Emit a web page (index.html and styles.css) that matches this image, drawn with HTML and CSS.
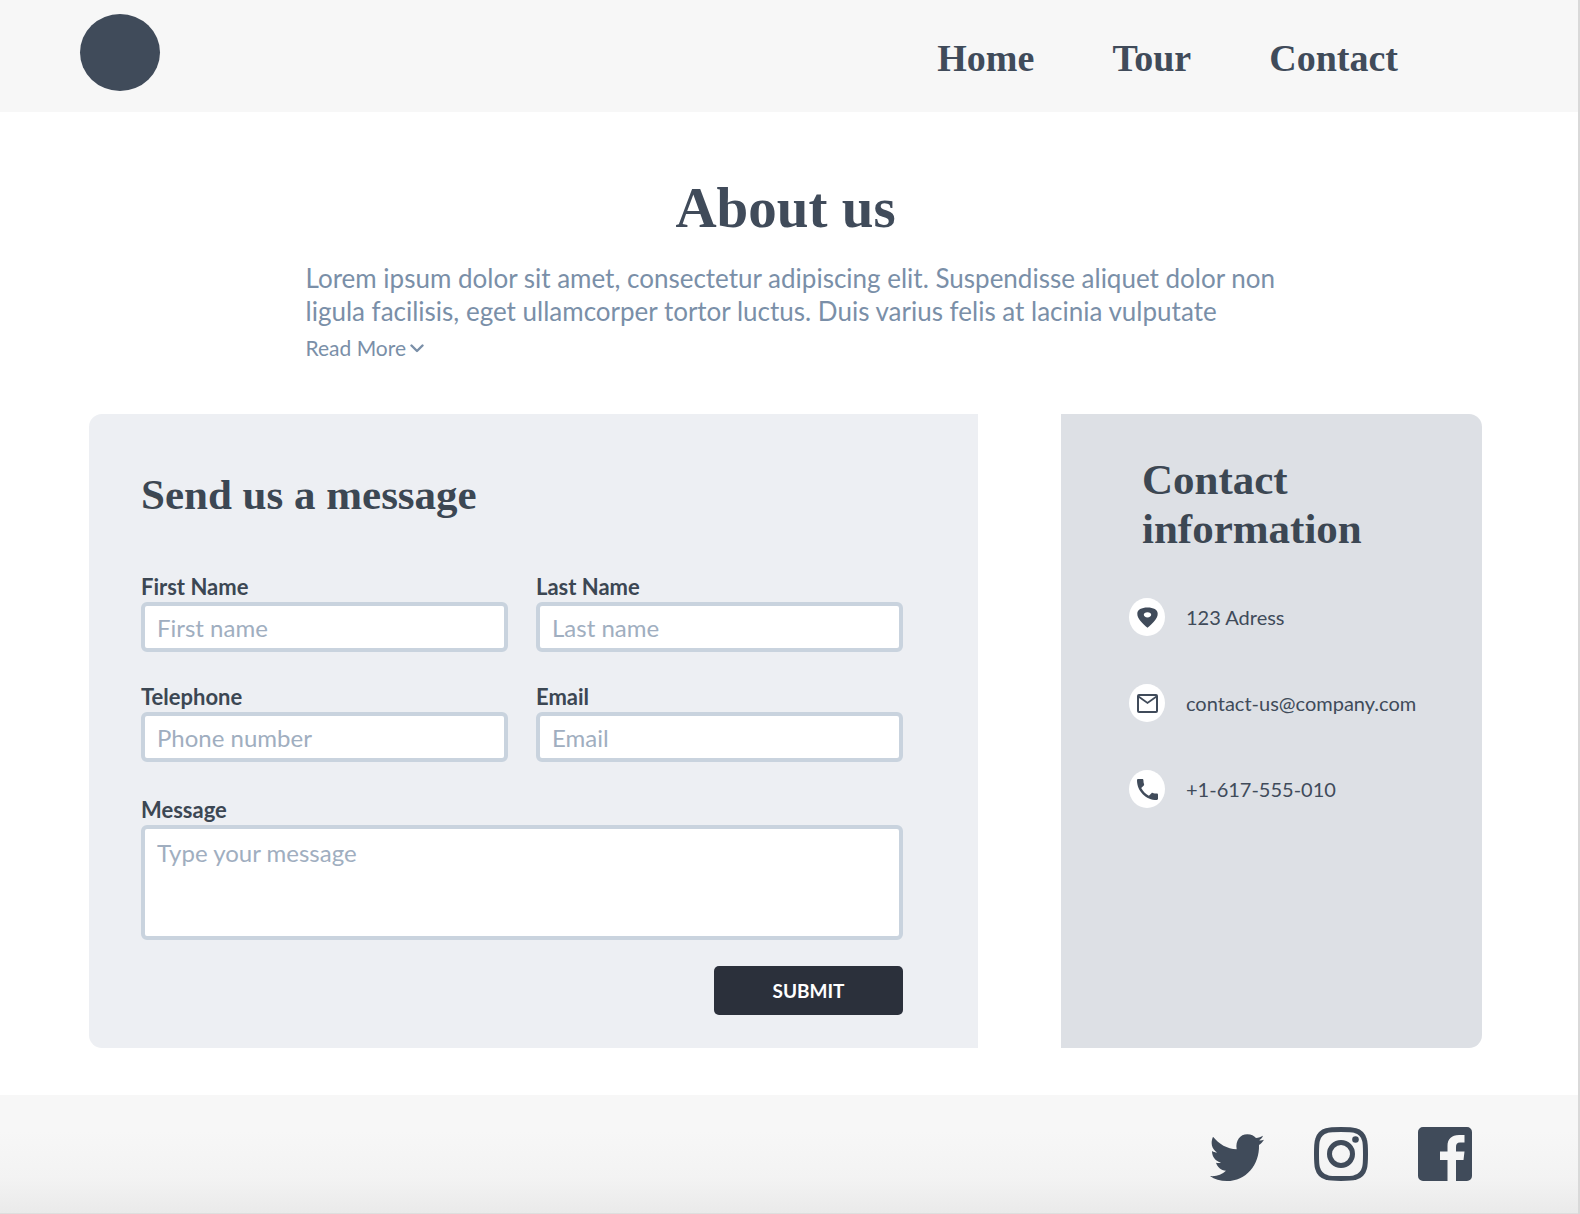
FILE: index.html
```html
<!DOCTYPE html>
<html lang="en">
<head>
  <meta charset="utf-8">
  <meta name="viewport" content="width=device-width, initial-scale=1">
  <title>About us</title>
  <link rel="stylesheet" href="styles.css">
</head>
<body>
  <header class="site-header">
    <a class="logo" href="#" aria-label="Start page"></a>
    <nav class="nav">
      <a href="#">Home</a>
      <a href="#">Tour</a>
      <a href="#">Contact</a>
    </nav>
  </header>

  <main>
    <section class="about">
      <h1>About us</h1>
      <div class="about-text">
        <p>Lorem ipsum dolor sit amet, consectetur adipiscing elit. Suspendisse aliquet dolor non ligula facilisis, eget ullamcorper tortor luctus. Duis varius felis at lacinia vulputate</p>
        <a class="read-more" href="#">Read More
          <svg width="14" height="9" viewBox="0 0 14 9" aria-hidden="true"><path d="M1.500 1.500 7 7l5.500-5.500" fill="none" stroke="currentColor" stroke-width="2.400" stroke-linecap="round" stroke-linejoin="round"/></svg>
        </a>
      </div>
    </section>

    <div class="panels">
      <form class="message-panel">
        <h2>Send us a message</h2>
        <div class="fields">
          <div class="field">
            <label for="first">First Name</label>
            <input id="first" type="text" placeholder="First name">
          </div>
          <div class="field">
            <label for="last">Last Name</label>
            <input id="last" type="text" placeholder="Last name">
          </div>
          <div class="field">
            <label for="phone">Telephone</label>
            <input id="phone" type="tel" placeholder="Phone number">
          </div>
          <div class="field">
            <label for="email">Email</label>
            <input id="email" type="email" placeholder="Email">
          </div>
          <div class="field field-wide">
            <label for="message">Message</label>
            <textarea id="message" placeholder="Type your message"></textarea>
          </div>
        </div>
        <button class="submit" type="submit">SUBMIT</button>
      </form>

      <aside class="info-panel">
        <h2>Contact<br>information</h2>
        <ul class="contacts">
          <li>
            <span class="badge"><svg width="21" height="21" viewBox="0 0 21 21" aria-hidden="true"><path fill="currentColor" fill-rule="evenodd" d="M10.500.5C4.500.5.3 2.600.3 6.800c0 5.200 5.200 9.700 10.200 14 5-4.300 10.200-8.800 10.200-14C20.700 2.600 16.500.5 10.500.5Zm0 4.700c2.200 0 3.700 1.100 3.700 2.600s-1.500 2.600-3.700 2.600-3.700-1.100-3.700-2.600 1.500-2.600 3.700-2.600Z"/></svg></span>
            <span>123 Adress</span>
          </li>
          <li>
            <span class="badge"><svg width="21" height="19" viewBox="0 0 21 19" aria-hidden="true"><rect x="1" y="1" width="19" height="17" rx="1" fill="none" stroke="currentColor" stroke-width="2"/><path d="m1.500 2.500 9 6.500 9-6.500" fill="none" stroke="currentColor" stroke-width="1.800"/></svg></span>
            <span>contact-us@company.com</span>
          </li>
          <li>
            <span class="badge"><svg width="21" height="21" viewBox="3 3 18 18" aria-hidden="true"><path fill="currentColor" d="M6.620 10.790c1.440 2.830 3.760 5.140 6.590 6.590l2.200-2.200c.27-.27.67-.36 1.020-.24 1.120.37 2.330.57 3.570.57.55 0 1 .45 1 1V20c0 .55-.45 1-1 1-9.390 0-17-7.610-17-17 0-.55.45-1 1-1h3.500c.55 0 1 .45 1 1 0 1.250.2 2.450.57 3.570.11.35.03.74-.25 1.020l-2.200 2.200z"/></svg></span>
            <span>+1-617-555-010</span>
          </li>
        </ul>
      </aside>
    </div>
  </main>

  <footer class="site-footer">
    <a href="#" aria-label="Twitter"><svg width="54" height="47" viewBox="57 157 162 142" preserveAspectRatio="none" aria-hidden="true"><path fill="currentColor" d="M66 165C84 187 108 202 137 203C133 177 147 158 169 158C181 158 189 163 195 169C203 168 210 165 216 162C214 168 209 173 204 176C209 177 214 176 219 174C215 181 210 186 204 190C206 250 165 299 108 299C88 299 70 294 57 284C76 286 93 280 105 268C90 267 79 257 75 244C80 245 85 245 90 243C74 239 63 226 63 208C68 211 73 212 78 213C62 201 58 183 66 165Z"/></svg></a>
    <a href="#" aria-label="Instagram"><svg width="54" height="54" viewBox="0 0 54 54" aria-hidden="true"><path d="M27 2.500c-7 0-11 0-14 1C8 4.800 4.800 8 3.500 13c-1 3-1 7-1 14s0 11 1 14C4.800 46 8 49.200 13 50.500c3 1 7 1 14 1s11 0 14-1C46 49.200 49.200 46 50.500 41c1-3 1-7 1-14s0-11-1-14C49.200 8 46 4.800 41 3.500c-3-1-7-1-14-1Z" fill="none" stroke="currentColor" stroke-width="5"/><circle cx="27" cy="27" r="11.500" fill="none" stroke="currentColor" stroke-width="5"/><circle cx="41.500" cy="12.500" r="3.300" fill="currentColor"/></svg></a>
    <a href="#" aria-label="Facebook"><svg width="54" height="54" viewBox="0 0 54 54" aria-hidden="true"><path fill="currentColor" d="M5 0h44a5 5 0 0 1 5 5v44a5 5 0 0 1-5 5H38V33h7.500l1-8.500H38V20c0-3 1-4.500 4-4.500h4.500V8H41c-7.500 0-11.500 4-11.500 11v5.500H22V33h7.500v21H5a5 5 0 0 1-5-5V5a5 5 0 0 1 5-5Z"/></svg></a>
  </footer>
</body>
</html>
```

FILE: styles.css
```css
:root {
  --ink: #404b5a;
  --ink-soft: #7a8fa8;
  --display: "Liberation Serif", serif;
  --text: Lato, sans-serif;
}

* {
  box-sizing: border-box;
}

body {
  display: flex;
  flex-direction: column;
  min-height: 100vh;
  margin: 0;
  border-right: 2px solid #d9d9d9;
  background: #fff;
  color: var(--ink);
  font-family: var(--text);
}

a {
  color: inherit;
  text-decoration: none;
}

h1,
h2 {
  margin: 0;
  font-family: var(--display);
  font-weight: bold;
}

h2 {
  color: #3c4753;
  font-size: 43px;
  line-height: 49px;
}

.site-header {
  display: flex;
  align-items: flex-start;
  justify-content: space-between;
  height: 112px;
  padding: 14px 180px 0 80px;
  background: #f7f7f7;
}

.logo {
  width: 80px;
  height: 77px;
  border-radius: 50%;
  background: var(--ink);
}

.nav {
  display: flex;
  gap: 78px;
  padding-top: 22px;
  font: bold 38px/44px var(--display);
}

main {
  flex: 1;
  padding: 64px 96px 47px 89px;
}

.about {
  max-width: 980px;
  margin: 0 auto;
}

.about h1 {
  font-size: 57px;
  line-height: 64px;
  text-align: center;
}

.about-text {
  padding: 22px 0 0 10px;
}

.about p {
  margin: 0;
  color: var(--ink-soft);
  font-size: 26px;
  line-height: 33px;
}

.read-more {
  display: inline-flex;
  align-items: center;
  gap: 4px;
  margin-top: 8px;
  color: var(--ink-soft);
  font-size: 21px;
  line-height: 24px;
}

.panels {
  display: grid;
  grid-template-columns: 889fr 421fr;
  gap: 83px;
  margin-top: 54px;
}

.message-panel {
  display: flex;
  flex-direction: column;
  padding: 56px 75px 33px 52px;
  border-radius: 13px 0 0 13px;
  background: #edeff3;
}

.fields {
  display: grid;
  grid-template-columns: 1fr 1fr;
  gap: 32px 28px;
  margin-top: 55px;
}

.field {
  display: flex;
  flex-direction: column;
  gap: 2px;
}

.field-wide {
  grid-column: 1 / -1;
  margin-top: 3px;
}

.field label {
  color: #3c4753;
  font-size: 22px;
  font-weight: bold;
  line-height: 26px;
}

.field input,
.field textarea {
  width: 100%;
  height: 50px;
  margin: 0;
  padding: 0 12px;
  border: 4px solid #c9d3de;
  border-radius: 6px;
  background: #fff;
  color: var(--ink);
  font: 24px/28px var(--text);
}

.field textarea {
  height: 115px;
  padding-top: 10px;
  resize: none;
}

.field ::placeholder {
  color: #a0aec0;
  opacity: 1;
}

.submit {
  align-self: flex-end;
  width: 189px;
  height: 49px;
  margin-top: 26px;
  border: 0;
  border-radius: 5px;
  background: #2b303b;
  color: #fff;
  font: bold 19px/24px var(--text);
}

.info-panel {
  padding: 41px 20px 0 68px;
  border-radius: 0 13px 13px 0;
  background: #dde0e5;
}

.info-panel h2 {
  padding-left: 13px;
}

.contacts {
  display: grid;
  gap: 48px;
  margin: 45px 0 0;
  padding: 0;
  list-style: none;
  font-size: 20px;
  line-height: 24px;
}

.contacts li {
  display: flex;
  align-items: center;
  gap: 21px;
}

.badge {
  display: flex;
  flex: none;
  align-items: center;
  justify-content: center;
  width: 36px;
  height: 38px;
  border-radius: 50%;
  background: #fff;
}

.site-footer {
  display: flex;
  align-items: flex-end;
  justify-content: flex-end;
  gap: 50px;
  height: 119px;
  padding: 0 106px 32px;
  border-bottom: 1px solid #dedede;
  background: linear-gradient(#f7f7f7 30%, #f3f3f3 70%, #eaeaea);
}

.site-footer svg {
  display: block;
}
```
